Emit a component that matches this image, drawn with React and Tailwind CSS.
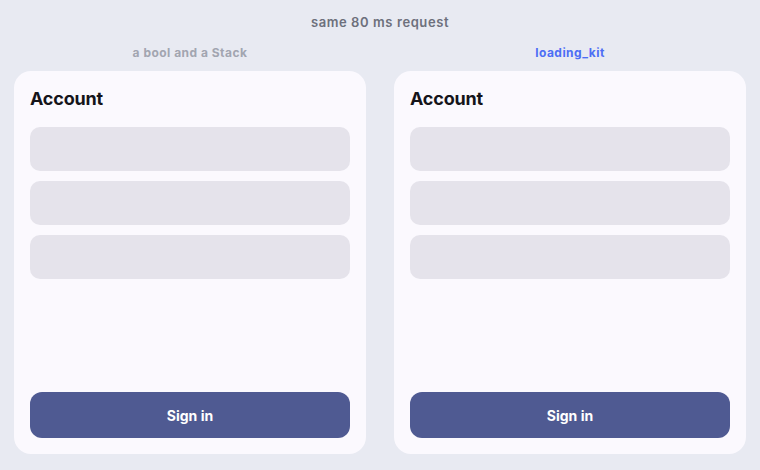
export default function App() {
  const panels = [
    { label: 'a bool and a Stack', tone: 'text-[#a2a5b0]' },
    { label: 'loading_kit', tone: 'text-[#4d6ef5]' },
  ]

  return (
    <div
      className="w-[760px] h-[470px] bg-[#e8eaf2] flex flex-col items-center px-[14px] pt-[12px]"
      style={{ fontFamily: 'Inter, "Noto Sans", sans-serif' }}
    >
      <h2 className="text-[13px] leading-[20px] font-semibold text-[#6d707c] tracking-[0.045em]">
        same 80 ms request
      </h2>
      <div className="w-full flex gap-[28px] mt-[13px]">
        {panels.map((p) => (
          <div key={p.label} className="flex-1 flex flex-col">
            <div className={`text-center text-[12px] leading-[16px] font-bold tracking-[0.04em] ${p.tone}`}>
              {p.label}
            </div>
            {/* card */}
            <div className="mt-[10px] h-[383px] bg-[#fbf9fe] rounded-[17px] p-[16px] flex flex-col">
              <h3 className="text-[18px] leading-[24px] font-bold text-[#15141a] tracking-[-0.01em]">Account</h3>
              <div className="mt-[16px] flex flex-col gap-[10px]">
                <div className="h-[44px] rounded-[10px] bg-[#e5e3eb]" />
                <div className="h-[44px] rounded-[10px] bg-[#e5e3eb]" />
                <div className="h-[44px] rounded-[10px] bg-[#e5e3eb]" />
              </div>
              <button className="mt-auto h-[46px] rounded-[12px] bg-[#4f5a92] text-white text-[14px] font-bold">
                Sign in
              </button>
            </div>
          </div>
        ))}
      </div>
    </div>
  )
}
